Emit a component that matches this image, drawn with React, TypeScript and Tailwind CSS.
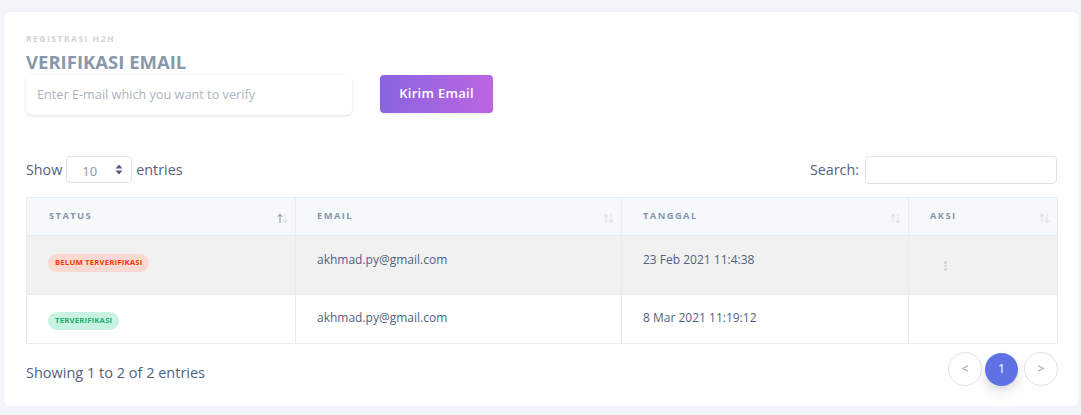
import React from "react";

const SortIcon = ({ active }: { active?: boolean }) => (
  <svg width="11" height="11" viewBox="0 0 11 11" className="mt-[3px]">
    <g fill="none" strokeWidth="1.2">
      <path d="M3 10 V1.5 M0.8 3.6 L3 1.3 L5.2 3.6" stroke={active ? "#9aa5b4" : "#dfe3e8"} />
      <path d="M8 1 V9.5 M5.8 7.4 L8 9.7 L10.2 7.4" stroke="#dfe3e8" />
    </g>
  </svg>
);

export default function App() {
  const font = { fontFamily: '"Open Sans", "Noto Sans", sans-serif' };
  return (
    <div className="min-h-[415px] w-[1081px] bg-[#f4f5fa] pt-[12px]" style={font}>
      <div className="ml-[4px] h-[394px] w-[1075px] rounded-[6px] bg-white px-[22px] pt-[22px] shadow-[0_0_2px_rgba(0,0,0,0.06)]">
        <div className="text-[8.5px] font-bold uppercase leading-[10px] tracking-[1.5px] text-[#ced4da]">
          Registrasi H2H
        </div>
        <div className="mt-[6px] text-[18.5px] font-bold leading-[24px] text-[#8898aa]">VERIFIKASI EMAIL</div>
        <div className="mt-[1px] flex items-start">
          <div className="flex h-[40px] w-[326px] items-center rounded-[6px] bg-white px-[11px] text-[12.7px] text-[#adb5bd] shadow-[0_1px_3px_rgba(50,50,93,0.15),0_1px_0_rgba(0,0,0,0.02)]">
            Enter E-mail which you want to verify
          </div>
          <button className="ml-[28px] h-[38px] w-[113px] rounded-[4px] bg-[linear-gradient(87deg,#8965e0,#bc65e0)] text-[13px] font-semibold tracking-[0.3px] text-white shadow-[0_1px_3px_rgba(50,50,93,0.1)]">
            Kirim Email
          </button>
        </div>

        <div className="mt-[41px] flex h-[27px] items-center justify-between text-[14.3px] text-[#525f7f]">
          <div className="flex items-center">
            <span>Show</span>
            <div className="mx-[4px] flex h-[27px] w-[66px] items-center justify-between rounded-[4px] border border-[#dee2e6] pl-[15px] pr-[8px] text-[13px] text-[#8898aa]">
              <span className="mt-[4px]">10</span>
              <svg width="8" height="11" viewBox="0 0 8 11">
                <path d="M4 0.5 L7.5 4.5 H0.5 Z" fill="#525f7f" />
                <path d="M4 10.5 L7.5 6.5 H0.5 Z" fill="#525f7f" />
              </svg>
            </div>
            <span>entries</span>
          </div>
          <div className="flex items-center">
            <span>Search:</span>
            <div className="ml-[6px] h-[28px] w-[192px] rounded-[4px] border border-[#dee2e6]" />
          </div>
        </div>

        <div className="mt-[14px] w-[1032px] border border-[#e9ecef]">
          <div className="flex h-[37px] bg-[#f6f9fc] text-[9.4px] font-bold uppercase tracking-[1.4px] text-[#8898aa]">
            <div className="flex w-[269px] items-center justify-between border-r border-[#e9ecef] pl-[22px] pr-[7px]">
              <span>Status</span>
              <SortIcon active />
            </div>
            <div className="flex w-[326px] items-center justify-between border-r border-[#e9ecef] pl-[21px] pr-[7px]">
              <span>Email</span>
              <SortIcon />
            </div>
            <div className="flex w-[287px] items-center justify-between border-r border-[#e9ecef] pl-[21px] pr-[7px]">
              <span>Tanggal</span>
              <SortIcon />
            </div>
            <div className="flex flex-1 items-center justify-between pl-[21px] pr-[7px]">
              <span>Aksi</span>
              <SortIcon />
            </div>
          </div>

          <div className="flex h-[59px] border-t border-[#e9ecef] bg-[#f1f1f1] text-[12px] text-[#525f7f]">
            <div className="w-[269px] border-r border-[#e9ecef] pl-[21px] pt-[16px]">
              <span className="inline-flex h-[18px] items-center rounded-full bg-[#f9d9d1] px-[7px] text-[7.7px] font-bold uppercase tracking-[0.2px] text-[#ff3709]">
                Belum Terverifikasi
              </span>
            </div>
            <div className="w-[326px] border-r border-[#e9ecef] pl-[21px] pt-[15px]">akhmad.py@gmail.com</div>
            <div className="w-[287px] border-r border-[#e9ecef] pl-[21px] pt-[15px]">23 Feb 2021 11:4:38</div>
            <div className="flex flex-1 flex-col items-start pl-[35px] pt-[25px]">
              <div className="flex flex-col gap-[1px]">
                <span className="h-[2.5px] w-[2.5px] rounded-full bg-[#cfd3d8]" />
                <span className="h-[2.5px] w-[2.5px] rounded-full bg-[#cfd3d8]" />
                <span className="h-[2.5px] w-[2.5px] rounded-full bg-[#cfd3d8]" />
              </div>
            </div>
          </div>

          <div className="flex h-[49px] border-t border-[#e9ecef] bg-white text-[12px] text-[#525f7f]">
            <div className="w-[269px] border-r border-[#e9ecef] pl-[21px] pt-[15px]">
              <span className="inline-flex h-[18px] items-center rounded-full bg-[#c9f3e1] px-[7px] text-[7.7px] font-bold uppercase tracking-[0.2px] text-[#1aae6f]">
                Terverifikasi
              </span>
            </div>
            <div className="w-[326px] border-r border-[#e9ecef] pl-[21px] pt-[14px]">akhmad.py@gmail.com</div>
            <div className="w-[287px] border-r border-[#e9ecef] pl-[21px] pt-[14px]">8 Mar 2021 11:19:12</div>
            <div className="flex-1" />
          </div>
        </div>

        <div className="mt-[8px] flex w-[1032px] items-center justify-between">
          <span className="mt-[8px] text-[14.5px] text-[#525f7f]">Showing 1 to 2 of 2 entries</span>
          <div className="flex items-center gap-[3px]">
            <div className="flex h-[34px] w-[34px] items-center justify-center rounded-full border border-[#dee2e6] text-[12px] text-[#8898aa]">&lt;</div>
            <div className="flex h-[33px] w-[33px] items-center justify-center rounded-full bg-[#5e72e4] text-[13px] text-white shadow-[0_7px_14px_rgba(50,50,93,0.1),0_3px_6px_rgba(0,0,0,0.08)]">1</div>
            <div className="ml-[3px] flex h-[34px] w-[34px] items-center justify-center rounded-full border border-[#dee2e6] text-[12px] text-[#8898aa]">&gt;</div>
          </div>
        </div>
      </div>
    </div>
  );
}
